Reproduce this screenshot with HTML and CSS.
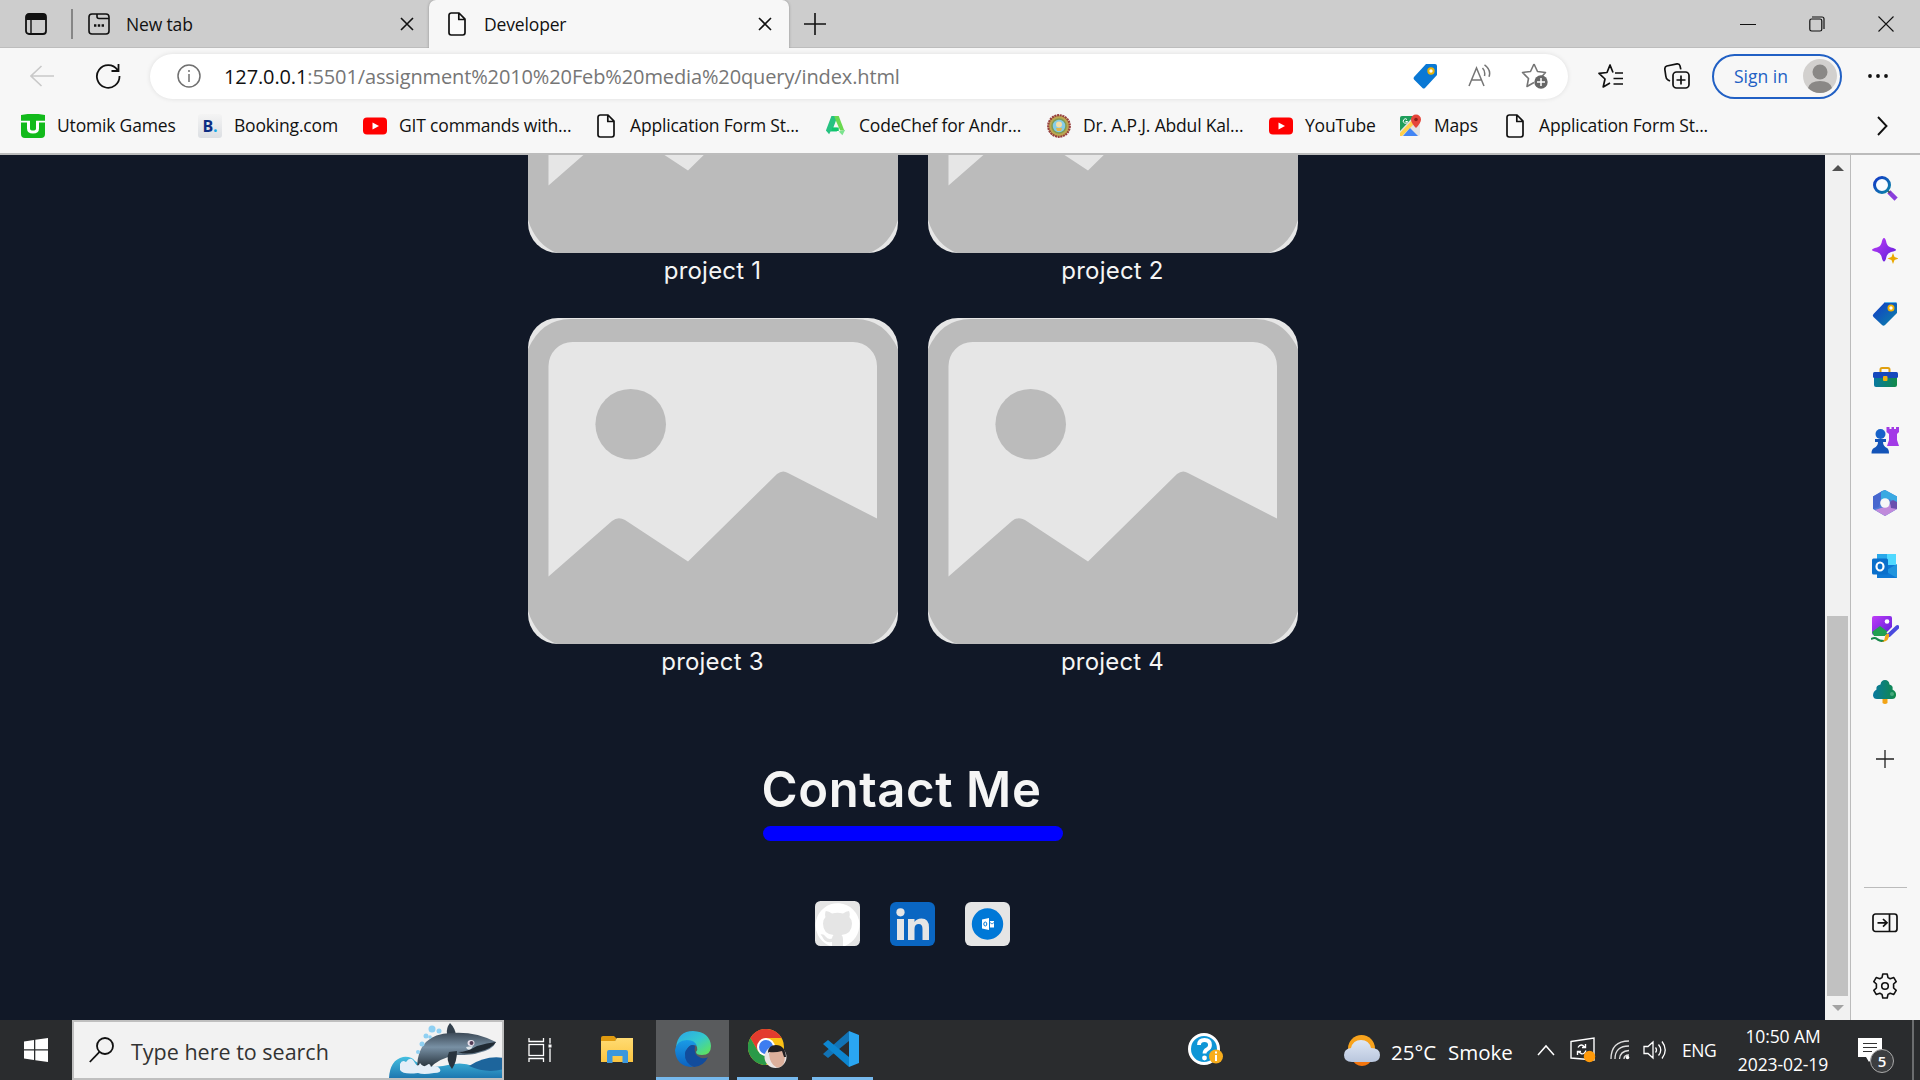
FILE: index.html
```html
<!DOCTYPE html>
<html lang="en">
<head>
<meta charset="utf-8">
<title>Developer</title>
<link rel="stylesheet" href="styles.css">
</head>
<body>
<svg width="0" height="0" class="defs">
  <defs>
    <linearGradient id="blue" x1="0" y1="0" x2="1" y2="1"><stop offset="0" stop-color="#1238c8"/><stop offset="1" stop-color="#0c86a8"/></linearGradient>
    <linearGradient id="violet" x1="0" y1="0" x2="1" y2="1"><stop offset="0" stop-color="#c03cf8"/><stop offset="1" stop-color="#5a1ed8"/></linearGradient>
    <linearGradient id="teal" x1="0" y1="0" x2="1" y2="0"><stop offset="0" stop-color="#0878a0"/><stop offset="1" stop-color="#128a48"/></linearGradient>
    <linearGradient id="edgeTop" x1="0" y1="0" x2="1" y2="1"><stop offset="0" stop-color="#2aa5ea"/><stop offset=".5" stop-color="#33c8cf"/><stop offset="1" stop-color="#66e84a"/></linearGradient>
    <linearGradient id="edgeLow" x1="0" y1="0" x2="0" y2="1"><stop offset="0" stop-color="#1a9be6"/><stop offset="1" stop-color="#0b62c0"/></linearGradient>
    <linearGradient id="whale" x1="0" y1="0" x2="0" y2="1"><stop offset="0" stop-color="#3d4a57"/><stop offset=".4" stop-color="#7890a4"/><stop offset="1" stop-color="#1f2a33"/></linearGradient>
    <linearGradient id="sea" x1="0" y1="0" x2="0" y2="1"><stop offset="0" stop-color="#45bfe0"/><stop offset="1" stop-color="#1d77b0"/></linearGradient>
    <linearGradient id="cloud" x1="0" y1="0" x2="0" y2="1"><stop offset="0" stop-color="#dfe7f5"/><stop offset="1" stop-color="#b9c6dd"/></linearGradient>
    <linearGradient id="folder" x1="0" y1="0" x2="0" y2="1"><stop offset="0" stop-color="#ffdb73"/><stop offset="1" stop-color="#fbc540"/></linearGradient>
    <symbol id="doc" viewBox="0 0 18 24"><path d="M3.2 1H11l6 6.200V20.800a2.200 2.200 0 0 1-2.200 2.200H3.200A2.200 2.200 0 0 1 1 20.800V3.200A2.200 2.200 0 0 1 3.200 1zM10.800 1.200V7.500H16.800" fill="#fafafa" stroke="#111" stroke-width="1.700" stroke-linejoin="round"/></symbol>
    <symbol id="cross" viewBox="0 0 14 14"><path d="M1 1 13 13M13 1 1 13" stroke="#111" stroke-width="1.600" fill="none"/></symbol>
    <symbol id="yt" viewBox="0 0 24 24"><rect x="0" y="3.500" width="24" height="17" rx="4" fill="#f00"/><path d="M9.500 8.500v7l6.500-3.500z" fill="#fff"/></symbol>
    <symbol id="placeholder" viewBox="0 0 370 326">
      <rect width="370" height="326" fill="#e6e6e6"/>
      <path d="M0 31Q14 1 42 1H328Q356 1 370 31V293Q362 318 341 326H29Q8 318 0 293z" fill="#bbb"/>
      <path d="M20.500 48a24 24 0 0 1 24-24H325a24 24 0 0 1 24 24V200.500L260 155Q254.500 151.500 249 156L160 243.500 97 202Q90 198 84 203L20.500 258.500z" fill="#e6e6e6"/>
      <circle cx="102.700" cy="106.200" r="35.300" fill="#bbb"/>
    </symbol>
  </defs>
</svg>

<div class="screen">
  <header class="tabstrip">
    <svg class="tab-actions" width="22" height="22" viewBox="0 0 22 22"><rect x="1" y="1" width="20" height="20" rx="3" fill="none" stroke="#111" stroke-width="1.800"/><path d="M1 4a3 3 0 0 1 3-3h14a3 3 0 0 1 3 3v3H1z" fill="#111"/><path d="M6 7v14" stroke="#111" stroke-width="1.400"/></svg>
    <span class="tab-divider"></span>
    <div class="tab">
      <svg width="22" height="22" viewBox="0 0 22 22" fill="none" stroke="#111" stroke-width="1.600"><rect x="1" y="1" width="20" height="20" rx="3"/><path d="M9 1v2.500q0 2 2 2H21"/><path d="M6 12.500h2.400M9.800 12.500h2.400M13.600 12.500H16" stroke-width="2.400"/></svg>
      <span class="tab-title">New tab</span>
      <svg class="close" width="14" height="14"><use href="#cross"/></svg>
    </div>
    <div class="tab active">
      <svg width="18" height="24"><use href="#doc"/></svg>
      <span class="tab-title">Developer</span>
      <svg class="close" width="14" height="14"><use href="#cross"/></svg>
    </div>
    <svg class="new-tab" width="22" height="22" viewBox="0 0 22 22"><path d="M11 0v22M0 11h22" stroke="#111" stroke-width="1.600"/></svg>
    <div class="window-buttons">
      <svg width="16" height="16" viewBox="0 0 16 16"><path d="M0 8.500H16" stroke="#111"/></svg>
      <svg width="16" height="16" viewBox="0 0 16 16" fill="none" stroke="#111" stroke-width="1.200"><rect x=".8" y="3" width="12" height="12" rx="1.800"/><path d="M3 1H13q2 0 2 2V13"/></svg>
      <svg width="16" height="16" viewBox="0 0 16 16"><path d="M.5.5l15 15M15.500.5l-15 15" stroke="#111" stroke-width="1.100"/></svg>
    </div>
  </header>

  <nav class="toolbar">
    <svg class="back" width="24" height="22" viewBox="0 0 24 22" fill="none" stroke="#c9c9c9" stroke-width="1.600"><path d="M24 11H1M11.500 1 1 11l10.500 10"/></svg>
    <svg class="reload" width="26" height="26" viewBox="0 0 26 26" fill="none" stroke="#111" stroke-width="1.800"><path d="M22.500 7A11.300 11.300 0 1 0 24.500 13M23.500 1v7h-7"/></svg>
    <div class="address">
      <svg width="24" height="24" viewBox="0 0 24 24" fill="none" stroke="#707070" stroke-width="1.500"><circle cx="12" cy="12" r="11"/><path d="M12 10v8M12 6v2"/></svg>
      <span class="url"><b>127.0.0.1</b>:5501/assignment%2010%20Feb%20media%20query/index.html</span>
      <svg width="24" height="25" viewBox="0 0 24 25"><path d="M13 0H22a2 2 0 0 1 2 2V11L12 24Q10.500 25 9.500 24L1 15.500Q0 14 1 13z" fill="#0a78d4"/><circle cx="18" cy="7" r="2.700" fill="#fff" stroke="#eab308" stroke-width="2"/></svg>
      <svg width="24" height="24" viewBox="0 0 24 24" fill="none" stroke="#757575" stroke-width="1.500"><path d="M1 22 8.500 4 16 22M3.500 16h10M14.500 4q3 3 2 8M16.500.8q7 5 4.500 12"/></svg>
      <svg width="28" height="28" viewBox="0 0 28 28"><path d="M13 2l3.500 7.500 8 1-5.500 6M13 2 9.500 9.500l-8 1 6 6-1.500 8 7-4" fill="none" stroke="#757575" stroke-width="1.600" stroke-linejoin="round"/><circle cx="20" cy="20" r="6.700" fill="#666"/><path d="M20 16v8M16 20h8" stroke="#fff" stroke-width="1.500"/></svg>
    </div>
    <svg width="26" height="26" viewBox="0 0 26 26" fill="none" stroke="#111" stroke-width="1.700" stroke-linejoin="round"><path d="M15 9.500 12 2 9 9.500l-8 .8 6 5.700-1.800 8 6.800-4M17 10h8M15.500 15.500H25M15.500 21H25"/></svg>
    <svg width="26" height="26" viewBox="0 0 26 26" fill="none" stroke="#111" stroke-width="1.700"><rect x="9" y="9" width="16" height="16" rx="3.500"/><path d="M17 12.500v9M12.500 17h9M6 18 4 17Q2 16 1.800 13L.8 6q0-2.500 2-3L13 .9q2.500-.3 3 2l.8 3.500"/></svg>
    <div class="signin"><span>Sign in</span>
      <svg width="34" height="34" viewBox="0 0 34 34"><circle cx="17" cy="17" r="17" fill="#d2d0ce"/><circle cx="17" cy="13" r="7.500" fill="#8a8886"/><path d="M5 29Q7 22 17 22t12 7Q24 34 17 34T5 29z" fill="#8a8886"/></svg>
    </div>
    <svg width="22" height="6" viewBox="0 0 22 6" fill="#111"><circle cx="3" cy="3" r="1.900"/><circle cx="11" cy="3" r="1.900"/><circle cx="19" cy="3" r="1.900"/></svg>
  </nav>

  <nav class="bookmarks">
    <a><svg width="24" height="24" viewBox="0 0 24 24"><path d="M0 1Q12-1.500 24 1V20q0 4-4 4H4q-4 0-4-4z" fill="#12ba1b"/><path d="M0 7.700H9M15 7.700H24" stroke="#fff" stroke-width="1.800"/><path d="M7.500 7V14.500q0 3.500 4.500 3.500t4.500-3.500V7" stroke="#fff" stroke-width="3" fill="none"/></svg><span>Utomik Games</span></a>
    <a><i class="booking">B<em>.</em></i><span>Booking.com</span></a>
    <a><svg width="24" height="24"><use href="#yt"/></svg><span>GIT commands with...</span></a>
    <a><svg width="24" height="24"><use href="#doc"/></svg><span>Application Form St...</span></a>
    <a><svg width="22" height="24" viewBox="0 0 24 24"><path d="M7 1h7l2 6-2-1-2 0L9 14h4v4H6L4.500 21 1 17z" fill="#26c281"/><path d="M10 1h5l6 16h-4.500L12 6.500z" fill="#69d84f"/><path d="M8 13.500h7v4H7z" fill="#0fc76b"/><path d="M15 18l7-2-3 6z" fill="#7be38f"/></svg><span>CodeChef for Andr...</span></a>
    <a><svg width="24" height="24" viewBox="0 0 24 24"><circle cx="12" cy="12" r="10.800" fill="#bda650" stroke="#963e3e" stroke-width="2.200" stroke-dasharray="2 .7"/><circle cx="12" cy="12" r="7" fill="#85cce8" stroke="#7d9c55" stroke-width="1.500"/><circle cx="12" cy="10.500" r="3" fill="#f4dda8"/><path d="M9 14h6l-1 3h-4z" fill="#e0b850"/></svg><span>Dr. A.P.J. Abdul Kal...</span></a>
    <a><svg width="24" height="24"><use href="#yt"/></svg><span>YouTube</span></a>
    <a><svg width="22" height="24" viewBox="0 0 22 24"><rect y="2" width="20" height="20" rx="2" fill="#e3e3e3"/><path d="M0 4q0-2 2-2H14L0 17z" fill="#1e9e5a"/><path d="M0 19 15 3l3 3L2 22H0z" fill="#ffd04a"/><path d="M3 22 10 14l8 8z" fill="#4285f4"/><path d="M16 14Q11 9 11 5.500a5 5 0 0 1 10 0Q21 9 16 14z" fill="#e5453a"/><circle cx="16" cy="5.500" r="1.800" fill="#8d2018"/><path d="M7 5.500a2.200 2.200 0 1 0 .6 2H5.500" fill="none" stroke="#fff"/></svg><span>Maps</span></a>
    <a><svg width="24" height="24"><use href="#doc"/></svg><span>Application Form St...</span></a>
    <svg class="more" width="11" height="20" viewBox="0 0 11 20"><path d="M1 1l8.500 9L1 19" fill="none" stroke="#111" stroke-width="1.900"/></svg>
  </nav>

  <div class="viewport">
    <main class="page">
      <section class="projects">
        <figure><svg class="shot"><use href="#placeholder"/></svg><figcaption>project 1</figcaption></figure>
        <figure><svg class="shot"><use href="#placeholder"/></svg><figcaption>project 2</figcaption></figure>
        <figure><svg class="shot"><use href="#placeholder"/></svg><figcaption>project 3</figcaption></figure>
        <figure><svg class="shot"><use href="#placeholder"/></svg><figcaption>project 4</figcaption></figure>
      </section>
      <section class="contact">
        <h1>Contact Me</h1>
        <div class="rule"></div>
        <div class="socials">
          <svg width="45" height="45" viewBox="0 0 45 45"><rect width="45" height="45" rx="5.500" fill="#e5e5e5"/><path d="M17 45V41Q10 42 8 37 7 34.500 5.500 33.500q3-1 5 2Q13 39 17 37.500q0-2 1.500-3.500Q8 33 8 22.500q0-4 2.500-6.500-1-3 .3-6Q14 10 17 12.500q5.500-1.500 11 0Q31 10 34 10q1.300 3 .3 6Q37 18.500 37 22.500 37 33 26.500 34q1.500 1.500 1.500 4v7h2Q44.500 38 44.500 22.500A22 22 0 1 0 14 44.500z" fill="#fff"/></svg>
          <svg width="45" height="44" viewBox="0 0 45 44"><rect width="45" height="44" rx="6" fill="#0a66c2"/><g fill="#e5e5e5"><circle cx="10.500" cy="10.300" r="4.100"/><path d="M7 17h7v21H7zM18 17h6.500v3q2-3.500 7-3.500 7.500 0 7.500 9V38h-6.500V27q0-5-3.700-5-4.300 0-4.300 5V38H18z"/></g></svg>
          <svg width="45" height="44" viewBox="0 0 45 44"><rect width="45" height="44" rx="6" fill="#e5e5e5"/><circle cx="22.500" cy="22" r="15.700" fill="#0078d7"/><path d="M17 17.500 24 16V28L17 26.500zM25 19h4v6.500h-4z" fill="#fff"/><ellipse cx="20.300" cy="22" rx="1.500" ry="2" fill="none" stroke="#0078d7"/><path d="M25 20.500l2 1.500 2-1.500" fill="none" stroke="#0078d7" stroke-width=".8"/></svg>
        </div>
      </section>
    </main>
    <div class="scrollbar">
      <svg width="12" height="6"><path d="M0 6 6 0l6 6z" fill="#505050"/></svg>
      <div class="thumb"></div>
      <svg width="12" height="6"><path d="M0 0h12L6 6z" fill="#a3a3a3"/></svg>
    </div>
    <aside class="sidebar">
      <span><svg width="26" height="26" viewBox="0 0 26 26"><path d="M18.500 18.500l4 4" stroke="#8a3fdc" stroke-width="4.500" stroke-linecap="square"/><path d="M15.500 15.500 18 18" stroke="#555" stroke-width="2"/><circle cx="10" cy="10" r="7.500" fill="#f8fcff" stroke="url(#blue)" stroke-width="3"/></svg></span>
      <span><svg width="26" height="26" viewBox="0 0 26 26"><path d="M12 0Q13.500 0 14.500 5 15.500 8.500 19 9.500 24 10.500 24 12q0 1-5 2-3.500 1-4.500 4.500-1 5-2.500 5t-2.500-5Q8.500 15 5 14 0 13 0 12q0-1.500 5-2.500Q8.500 8.500 9.500 5 10.500 0 12 0z" fill="url(#violet)"/><path d="M21 15l1.500 4 4 1.500-4 1.500L21 26l-1.500-4-4-1.500 4-1.500z" fill="#eaa800"/></svg></span>
      <span><svg width="26" height="26" viewBox="0 0 26 26"><path d="M13 1H23a2 2 0 0 1 2 2V12L13 24q-1.500 1.500-3 0L1.500 16Q0 14.500 1.500 13z" fill="url(#blue)"/><path d="M13 1.500h11" stroke="#53b5e8" stroke-width="1"/><circle cx="19" cy="7" r="2.600" fill="#fff" stroke="#f2b200" stroke-width="1.800"/></svg></span>
      <span><svg width="26" height="26" viewBox="0 0 26 26"><path d="M8.500 8V5.500Q8.500 4 10 4h6q1.500 0 1.500 1.500V8" fill="none" stroke="#e0a010" stroke-width="2"/><rect x="2" y="10" width="23" height="13" rx="2" fill="url(#teal)"/><rect x="1" y="8" width="25" height="6" rx="1.500" fill="#1548bd"/><rect x="11" y="12" width="4.500" height="5" rx="1" fill="#f0b010"/></svg></span>
      <span><svg width="28" height="28" viewBox="0 0 28 28"><path d="M15.500 1h3v2h2V1h2.500v2h2V1h3v5L26 8v6l1 3 1 3H16l1-3 1-3V8l-2.500-2z" fill="#a23ae6"/><circle cx="9.500" cy="8" r="5" fill="#1762c9"/><path d="M4 13h11v3h-3q0 4 4 6 2 1 2 5.500H.5Q.5 23 3 22q4-2 4-6H4z" fill="#1454b8"/></svg></span>
      <span><svg width="26" height="28" viewBox="0 0 26 28"><path d="M10 2 13 1 25 7.500V20L13 27 1 20V7.500z" fill="#4c7bd6"/><path d="M9 2.500 13 1 25 7.500V14l-8-4-8 1z" fill="#3aa9e2"/><path d="M13 1 9 3.500V10L7 18l-6 2V7.500z" fill="#4767cf"/><path d="M25 13v7l-12 7L3 21l9-3 7-3z" fill="#c08adb"/><path d="M25 13v7l-6-1-1-6 3-2z" fill="#6a4fae"/><circle cx="13" cy="14" r="4.800" fill="#f7f7f7"/></svg></span>
      <span><svg width="26" height="26" viewBox="0 0 26 26"><path d="M5 1H24v12H5z" fill="#28a8ea"/><path d="M15 1h9v12h-9z" fill="#50d9ff"/><path d="M5 12h20v13H5z" fill="#0f78d4"/><path d="M25 11v14L13 18z" fill="#2094dd"/><rect y="5.500" width="16" height="16" rx="1.500" fill="#0a6fcb"/><ellipse cx="8" cy="13.500" rx="3.500" ry="4" fill="none" stroke="#fff" stroke-width="2.200"/></svg></span>
      <span><svg width="28" height="28" viewBox="0 0 28 28"><rect x="1" y="1" width="20" height="19" rx="2" fill="url(#violet)"/><path d="M1 17l8-6 8 6-3 4H3z" fill="#22a050"/><circle cx="16" cy="6.500" r="2.300" fill="#fff"/><path d="M0 24q4-2 6 0t7 2" fill="none" stroke="#18884a" stroke-width="2"/><path d="M18 20 26 12" stroke="#f7f7f7" stroke-width="7"/><path d="M18 20 26.500 12" stroke="#4a4ade" stroke-width="4" stroke-linecap="round"/><path d="M18 19q1 7-7 8 3-2 3-5 1-4 4-3z" fill="#f0a818"/></svg></span>
      <span><svg width="26" height="26" viewBox="0 0 26 26"><path d="M10.500 18h5v6q-2.500 2-5 0z" fill="#f2a416"/><path d="M13 1q4 0 4.500 4.500 4 1 3 5 4 2 3.500 6-.5 3.500-4 3.500H5Q1.500 20 1 16.500q0-4 3.500-6-1-4 4-5Q9 1 13 1z" fill="url(#teal)"/><circle cx="20" cy="15" r="2" fill="#46a97c"/></svg></span>
      <span class="add"><svg width="18" height="18" viewBox="0 0 18 18"><path d="M9 0v18M0 9h18" stroke="#222" stroke-width="1.300"/></svg></span>
      <hr>
      <span><svg width="26" height="20" viewBox="0 0 26 20" fill="none" stroke="#111" stroke-width="1.700"><rect x="1" y="1" width="24" height="17.500" rx="2.500"/><path d="M17.500 1v17.500M5.500 9.800h9M11 6l4 3.800-4 3.800"/></svg></span>
      <span><svg width="26" height="26" viewBox="0 0 26 26" fill="none" stroke="#111" stroke-width="1.600" stroke-linejoin="round"><path d="M10.800 1h4.400l.8 3.600 2.200 1.200 3.600-1.200 2.400 4-2.600 2.400v4l2.600 2.400-2.400 4-3.600-1.200L16 21.400l-.8 3.600h-4.400l-.8-3.600-2.200-1.200-3.600 1.200-2.400-4L4.400 15v-4L1.800 8.600l2.400-4 3.600 1.200L10 4.600z"/><circle cx="13" cy="13" r="3.300"/></svg></span>
    </aside>
  </div>

  <footer class="taskbar">
    <svg class="start" width="24" height="24" viewBox="0 0 24 24" fill="#fff"><path d="M0 3.500 10 2V11.300H0zM11.300 1.800 24 0V11.300H11.300zM0 12.600H10V22L0 20.500zM11.300 12.600H24V24L11.300 22.200z"/></svg>
    <div class="search">
      <svg width="25" height="26" viewBox="0 0 25 26" fill="none" stroke="#111" stroke-width="1.800"><circle cx="16" cy="9" r="8"/><path d="M10.500 14.800.8 25"/></svg>
      <span>Type here to search</span>
      <svg class="orca" width="115" height="56" viewBox="0 0 115 56"><path d="M0 56Q1 38 14 35q8-1 12 4 10 8 28 5 18-5 30 0l31-2V56z" fill="url(#sea)"/><path d="M80 44Q97 33 115 36V47Q98 52 80 44z" fill="#1d659c"/><path d="M58 12Q57 6 61 1 66 6 67 13z" fill="#33404c"/><path d="M28 45Q29 12 62 11q24-2 45 9-3 8-18 11-5 2-21 2-19 3-28 14z" fill="url(#whale)"/><path d="M88 24q10-3 19-4-4 7-18 10-12 3-20 0 9 0 19-6z" fill="#202a33"/><path d="M60 30q-4 8 3 17 5-7 5-18z" fill="#29343e"/><ellipse cx="82" cy="21" rx="3.500" ry="3" fill="#e8e0ea"/><circle cx="82.500" cy="21" r="2" fill="#523b55"/><path d="M77 25l7-1-2 3q-4 2-5-2z" fill="#dfe7ec"/><g fill="#8fd0f2"><circle cx="43" cy="7" r="3.500"/><circle cx="50" cy="9" r="2.500"/><circle cx="37" cy="14" r="2.500"/><circle cx="33" cy="22" r="2.500"/><circle cx="29" cy="30" r="2"/><circle cx="41" cy="15" r="1.800"/></g><path d="M11 42q2-5 6-2 5-7 9 1 3 5 5 0 3 5 7 2 3-3 4 2 6-3 9 2 2 4-6 4-11 2-16 0-15 2-18-3z" fill="#e4eef8"/></svg>
    </div>
    <svg class="taskview" width="24" height="24" viewBox="0 0 24 24" fill="none" stroke="#fff" stroke-width="1.300"><path d="M1 0v3.500H15.500V0M1 24V20.500H15.500V24M22 0v5.500M22 10.500V24"/><rect x="1" y="6.500" width="14.500" height="11"/><path d="M22 6.500v3" stroke-width="3"/></svg>
    <div class="app"><svg width="33" height="28" viewBox="0 0 33 28"><path d="M0 2q0-2 2-2H13l3 3-3 3H0z" fill="#e09b10"/><path d="M0 5H14l2-3H32V26H0z" fill="url(#folder)"/><path d="M6 27V16q0-2 2-2H25q2 0 2 2V27H21.500V20h-10v7z" fill="#3c97dd"/></svg></div>
    <div class="app current"><svg width="36" height="36" viewBox="0 0 36 36"><path d="M1 16Q3 0 18 0 35 1 36 15q0 9-9 9-6 0-6-3 2-2 1-5-2-6-10-6Q5 10 1 16z" fill="url(#edgeTop)"/><path d="M0 19Q2 9 12 9q8 0 10 6-6-3-10 3-4 11 6 18Q1 36 0 19z" fill="url(#edgeLow)"/><path d="M12 18q4-6 8-3-2 9 6 12 5 1 7-1-4 9-14 10Q9 32 10 22q0-2 2-4z" fill="#124c9c"/></svg></div>
    <div class="app running"><svg width="40" height="40" viewBox="0 0 40 40"><circle cx="18" cy="18" r="18" fill="#fbc116"/><path d="M2.400 9A18 18 0 0 1 33.600 9H18L10.200 22.500z" fill="#e33b2e"/><path d="M2.400 9A18 18 0 0 0 18 36L25.800 22.500 10.200 22.500z" fill="#2a9a48"/><circle cx="18" cy="18" r="9" fill="#fff"/><circle cx="18" cy="18" r="7" fill="#3d7df0"/><circle cx="27.500" cy="28" r="11" fill="#e9e5e4"/><path d="M21 25q2-8 8-7 8 1 8 10l-1 6q-4 6-8 4-6-3-7-13z" fill="#dcb09c"/><path d="M20 24q0-8 8-8 9 0 10 12h-2l-2-6q-7 2-13 1z" fill="#201f22"/></svg></div>
    <div class="app running code"><svg width="36" height="36" viewBox="0 0 36 36"><path d="M26 0v10L5 27 0 23z" fill="#1273b5"/><path d="M5 9 26 26v10L0 13z" fill="#0d86d0"/><path d="M26 0 36 4V32L26 36z" fill="#2aa6f2"/></svg></div>
    <svg class="tail" width="35" height="34" viewBox="0 0 35 34"><circle cx="16" cy="16" r="14.500" fill="#0f96d6" stroke="#fff" stroke-width="3"/><path d="M11 12q0-5 5.500-5t5.500 5q0 3-3 4.500-2.500 1.500-2.500 4" stroke="#fff" stroke-width="3.800" fill="none"/><circle cx="16.500" cy="25" r="2.400" fill="#fff"/><circle cx="28" cy="23.500" r="7" fill="#f8ad1c"/><path d="M28 22v6M28 18.500v2" stroke="#fff" stroke-width="2"/></svg>
    <svg class="tail" width="36" height="31" viewBox="0 0 36 31"><circle cx="17.500" cy="13.500" r="13.500" fill="#f8a31d"/><path d="M8 24H28q-3 7-10 7T8 24z" fill="#f5760e"/><path d="M8 27q-8 0-8-7 0-6 7-7Q9 5 17 5t10 8q9 0 9 7t-8 7z" fill="url(#cloud)"/></svg>
    <span class="temp">25°C</span>
    <span class="smoke">Smoke</span>
    <svg width="18" height="12" viewBox="0 0 18 12"><path d="M1 11 9 2l8 9" fill="none" stroke="#fff" stroke-width="1.500"/></svg>
    <svg width="26" height="26" viewBox="0 0 26 26" fill="none" stroke="#fff" stroke-width="1.400"><path d="M1 4.500 24 1V23L1 21z"/><path d="M8 10.500q2-3.500 5-2l2 2M15.500 7v3.500H12M16 13.500q-2 4.500-5 3l-3-2M7.500 18v-3.500H11"/><circle cx="19.500" cy="19.500" r="5.700" fill="#ff9a0a" stroke="none"/></svg>
    <svg width="20" height="20" viewBox="0 0 20 20" fill="none" stroke="#e0e0e0" stroke-width="1.300"><path d="M1 19Q1 1 19 1M5 19Q5 6 19 6M9.500 19Q10 11 19 10.500M14 19q0-4 5-4"/><circle cx="17.500" cy="17.500" r="1.800" fill="#fff" stroke="none"/></svg>
    <svg width="24" height="20" viewBox="0 0 24 20" fill="none" stroke="#fff" stroke-width="1.300"><path d="M1 6.500h4L10 2v16L5 13.500H1zM12.500 7.500q2 2.500 0 5M15.500 4.500q4.500 5.500 0 11M19 1.500q6.500 8.500 0 17"/></svg>
    <span class="lang">ENG</span>
    <div class="clock"><span>10:50 AM</span><span>2023-02-19</span></div>
    <div class="notice"><svg width="25" height="25" viewBox="0 0 25 25"><path d="M0 0H24V19H15l-4 5-3-5H0z" fill="#fff"/><path d="M5 5.500h14M5 9.500h14M5 13.500h9" stroke="#333" stroke-width="1.200"/></svg><span class="badge">5</span></div>
    <span class="peek"></span>
  </footer>
</div>
</body>
</html>
```
FILE: styles.css
```css
* { box-sizing: border-box; }
body { margin: 0; background: #f7f7f7; font-family: "Open Sans", "Noto Sans", sans-serif; color: #111; overflow: hidden; }
svg { display: block; flex: none; }
.defs { position: absolute; }
span { white-space: nowrap; }
.screen { width: 1920px; height: 1080px; display: grid; grid-template-rows: 48px 56px 49px 867px 60px; }

/* Tabs */
.tabstrip { display: flex; align-items: center; background: #cdcdcd; border-bottom: 1px solid #bdbdbd; padding-left: 25px; font-size: 17.500px; letter-spacing: -.15px; }
.tab-divider { width: 2px; height: 30px; background: #868686; margin: 0 15px 0 24px; }
.tab { width: 341px; display: flex; align-items: center; gap: 16px; }
.tab .close { margin-left: auto; margin-right: 15px; }
.tab.active { width: 360px; height: 48px; margin-bottom: -1px; background: #f7f7f7; border-radius: 7px 7px 0 0; padding-left: 19px; gap: 18px; box-shadow: 0 0 3px rgba(0, 0, 0, .3); clip-path: inset(0 -4px 0 -4px); }
.tab.active .close { margin-right: 17px; }
.new-tab { margin-left: 15px; }
.window-buttons { display: flex; gap: 53px; margin-left: auto; margin-right: 26px; }

/* Toolbar */
.toolbar { display: grid; grid-template-columns: 65px 55px 1448px 66px 48px 155px auto; align-items: center; padding: 0 0 0 30px; background: #f7f7f7; }
.address { width: 1418px; height: 45px; border-radius: 23px; background: #fff; box-shadow: 0 0 5px rgba(0, 0, 0, .1); display: grid; grid-template-columns: 47px 1189px 55px 53px 28px; align-items: center; padding-left: 27px; }
.url { font-size: 20px; color: #767676; letter-spacing: -.12px; }
.url b { font-weight: 400; color: #111; }
.signin { width: 130px; height: 45px; border: 2px solid #2160c4; border-radius: 23px; display: flex; align-items: center; justify-content: space-between; padding: 0 3px 0 20px; color: #2160c4; font-size: 17.500px; }

/* Bookmarks */
.bookmarks { display: grid; grid-template-columns: 177px 165px 231px 231px 222px 222px 131px 103px 374px 11px; align-items: center; padding: 0 0 5px 21px; background: #f7f7f7; font-size: 17.500px; letter-spacing: -.18px; }
.bookmarks a { display: flex; align-items: center; gap: 12px; }
.bookmarks a span { margin-top: -2px; }
.booking { width: 24px; height: 24px; border-radius: 3px; background: linear-gradient(#f4f4f4, #dcdfe3); color: #0c2d83; font: 700 16px/24px "Open Sans", sans-serif; text-align: center; }
.booking em { color: #12a8e8; font-style: normal; }

/* Content area */
.viewport { display: grid; grid-template-columns: 1825px 25px 70px; border-top: 2px solid #bcbcbc; background: #f7f7f7; min-height: 0; }
.page { background: #111827; color: #f5f5f5; overflow: hidden; display: flex; flex-direction: column; align-items: center; justify-content: flex-end; font-family: Inter, Lato, sans-serif; }
.projects { display: grid; grid-template-columns: 370px 370px; gap: 29px 30px; flex: none; }
figure { margin: 0; }
.shot { width: 370px; height: 326px; border-radius: 30px; }
figcaption { height: 36px; line-height: 36px; font-size: 24px; letter-spacing: .2px; text-align: center; }
.contact { width: 300px; flex: none; height: 340px; padding-top: 73px; display: flex; flex-direction: column; }
h1 { margin: 0 0 0 -1px; font-size: 49px; line-height: 74px; font-weight: 600; letter-spacing: .6px; white-space: nowrap; }
.rule { height: 15px; border-radius: 8px; background: #00f; margin-top: -1px; }
.socials { display: flex; justify-content: center; align-items: flex-end; gap: 30px; margin-top: 60px; }
.scrollbar { background: #f1f1f1; display: flex; flex-direction: column; align-items: center; padding: 10px 0 9px; }
.thumb { width: 21px; height: 380px; margin-top: auto; margin-bottom: 9px; background: #c1c1c1; }
.sidebar { border-left: 1px solid #bcbcbc; display: flex; flex-direction: column; align-items: center; background: #f7f7f7; padding: 1px 1px 0 0; }
.sidebar span { height: 63px; width: 69px; display: grid; place-items: center; }
.sidebar .add { height: 71px; }
.sidebar hr { width: 43px; height: 1px; border: 0; background: #bbb; margin: 93px 0 3px; flex: none; }

/* Taskbar */
.taskbar { background: #2a2c2e; color: #fff; display: grid; grid-template-columns: 72px 456px 53px 75px 73px 75px 75px 344px 157px 68px 89px 33px 40px 33px 39px 52px 124px 54px 2px; align-items: center; }
.start { margin-left: 24px; }
.search { width: 432px; height: 60px; border: 2px solid #bfbfbf; background: #f2f2f2; color: #333; display: flex; align-items: center; font-size: 21.500px; overflow: hidden; padding-left: 15px; gap: 17px; }
.search span { margin-top: 2px; }
.orca { margin-left: auto; margin-right: -2px; }
.app { height: 60px; display: grid; place-items: center; width: 73px; }
.current, .running { border-bottom: 3px solid #76b9ed; }
.current { background: #595b5d; }
.running { width: 61px; margin-left: 8px; }
.code { padding-right: 3px; }
.tail { justify-self: end; }
.temp, .smoke { font-size: 20.500px; margin-top: 3px; }
.temp { padding-left: 11px; }
.lang { font-size: 17.500px; letter-spacing: -.4px; }
.clock { display: flex; flex-direction: column; align-items: center; font-size: 17.500px; line-height: 28px; width: 98px; letter-spacing: -.1px; }
.notice { position: relative; width: 25px; }
.badge { position: absolute; left: 12px; top: 11px; width: 24px; height: 24px; border: 1px solid #aaa; border-radius: 50%; background: #3c3e40; font: 600 15px/22px "Open Sans", sans-serif; text-align: center; }
.peek { height: 60px; background: #6b6d6f; }
```
